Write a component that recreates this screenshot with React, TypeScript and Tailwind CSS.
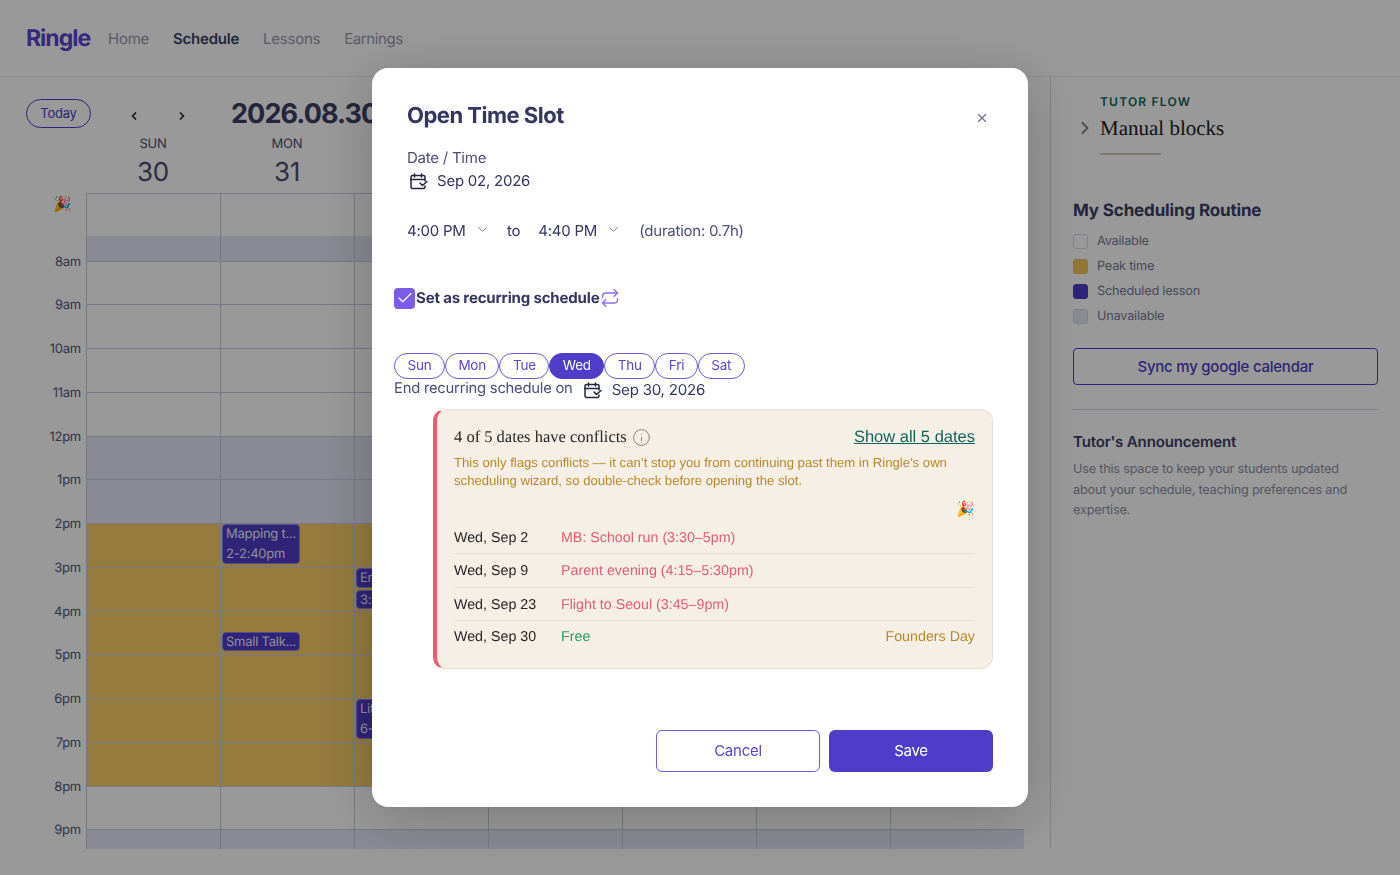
import { Check, ChevronDown, ChevronLeft, ChevronRight, Info, Repeat, X } from "lucide-react";

const days = [
  ["SUN", "30"],
  ["MON", "31"],
  ["TUE", "1"],
  ["WED", "2"],
  ["THU", "3"],
  ["FRI", "4"],
  ["SAT", "5"],
];
const hours = ["8am", "9am", "10am", "11am", "12pm", "1pm", "2pm", "3pm", "4pm", "5pm", "6pm", "7pm", "8pm"];
const blocked = ["12pm", "1pm"];
const peak = ["2pm", "3pm", "4pm", "5pm", "6pm", "7pm"];

function CalendarIcon() {
  return (
    <svg width="19" height="17" viewBox="0 0 19 17" fill="none" stroke="#23253f" strokeWidth="1.5" strokeLinecap="round" strokeLinejoin="round" className="shrink-0">
      <path d="M16 8V4a1.5 1.5 0 0 0-1.5-1.5h-11A1.5 1.5 0 0 0 2 4v10a1.5 1.5 0 0 0 1.5 1.5h11A1.5 1.5 0 0 0 16 14v-1" />
      <path d="M2 6.5h14M5.5 1v3M12.5 1v3M11 10l2.5 2.5L18 8.5" />
    </svg>
  );
}

function Lesson({ lines, h, top }: { lines: string[]; h: string; top: string }) {
  return (
    <div className={`absolute left-[1px] z-10 w-[78px] overflow-hidden whitespace-nowrap rounded-[4px] border border-[#8f83e0] bg-[#4f3cc8] px-[3px] text-[13px] leading-[19.5px] text-[#f0eefc] ${h} ${top}`}>
      {lines.map((l) => (
        <div key={l}>{l}</div>
      ))}
    </div>
  );
}

function GridRow({ label, kind }: { label: string; kind: "plain" | "blocked" | "peak" }) {
  return (
    <div className="flex h-[43.75px]">
      <div className="w-[86px] shrink-0 pr-[5px] pt-[1px] text-right text-[13px] leading-none text-[#55587a]">
        <span className="inline-block -translate-y-1/2">{label}</span>
      </div>
      {days.map(([d], i) => {
        const tint = kind === "blocked" ? "bg-[#e4e6f5]" : kind === "peak" && i < 3 ? "bg-[#f9cd68]" : "bg-white";
        return (
          <div key={d} className={`relative flex-1 border-l border-t border-[#c8cae2] ${tint}`}>
            {label === "2pm" && d === "MON" && <Lesson lines={["Mapping t...", "2-2:40pm"]} h="h-[40px]" top="top-0" />}
            {label === "4pm" && d === "MON" && <Lesson lines={["Small Talk..."]} h="h-[19px]" top="top-[20px]" />}
            {label === "3pm" && d === "TUE" && <Lesson lines={["English..."]} h="h-[20px]" top="top-0" />}
            {label === "3pm" && d === "TUE" && <Lesson lines={["3:30-4pm"]} h="h-[19px]" top="top-[22px]" />}
            {label === "6pm" && d === "TUE" && <Lesson lines={["Little w...", "6-6:40pm"]} h="h-[40px]" top="top-0" />}
          </div>
        );
      })}
    </div>
  );
}

function Calendar() {
  return (
    <main className="flex h-[772px] w-[1051px] shrink-0 flex-col overflow-hidden border-r border-[#d4d6e6] pr-[26px]">
      <div className="flex h-[52px] shrink-0 items-end pl-[26px]">
        <button className="mb-[1px] h-[29px] w-[65px] rounded-full border border-[#4f3cc8] text-[13px] text-[#4f3cc8]">Today</button>
        <ChevronLeft size={12} strokeWidth={3.5} className="mb-[7px] ml-[37px] text-[#23253f]" />
        <ChevronRight size={12} strokeWidth={3.5} className="mb-[7px] ml-[36px] text-[#23253f]" />
        <h2 className="-mb-[3px] ml-[43px] whitespace-nowrap text-[27px] font-bold leading-[36px] tracking-[-0.9px] text-[#3d4068]">2026.08.30 - 09.05</h2>
      </div>
      <div className="flex h-[64px] shrink-0 pl-[86px] pt-[6px]">
        {days.map(([d, n]) => (
          <div key={d} className="flex-1 text-center text-[#4b4e70]">
            <div className="pt-[1px] text-[13px] leading-[17px]">{d}</div>
            <div className="mt-[4px] text-[26px] leading-[32px]">{n}</div>
          </div>
        ))}
      </div>
      <div className="flex h-[43px] shrink-0">
        <div className="w-[86px] pr-[14px] pt-[1px] text-right text-[15px] leading-5">🎉</div>
        {days.map(([d]) => (
          <div key={d} className="flex-1 border-l border-t border-[#c8cae2] bg-white" />
        ))}
      </div>
      <div className="flex h-[24.5px] shrink-0">
        <div className="w-[86px]" />
        {days.map(([d]) => (
          <div key={d} className="flex-1 border-l border-[#c8cae2] bg-[#e4e6f5]" />
        ))}
      </div>
      <div className="shrink-0">
        {hours.map((h) => (
          <GridRow key={h} label={h} kind={blocked.includes(h) ? "blocked" : peak.includes(h) ? "peak" : "plain"} />
        ))}
      </div>
      <GridRow label="9pm" kind="blocked" />
    </main>
  );
}

function Sidebar() {
  return (
    <aside className="flex-1 pl-[22px] pr-[22px] pt-[17px]">
      <div className="relative pl-[27px]">
        <ChevronRight size={20} strokeWidth={2.5} className="absolute left-[2px] top-[24px] text-[#8c8274]" />
        <div className="text-[12px] font-semibold leading-4 tracking-[1.2px] text-[#10645c]">TUTOR FLOW</div>
        <div className="mt-[4px] font-['Liberation_Serif',serif] text-[21px] leading-[29px] tracking-normal text-[#1c1c1c]">Manual blocks</div>
        <div className="mt-[10px] h-[2px] w-[61px] bg-[#d8cdb8]" />
      </div>
      <h3 className="mt-[44px] text-[17px] font-bold leading-6 tracking-[-0.15px] text-[#3d4068]">My Scheduling Routine</h3>
      <ul className="mt-[10.5px] flex flex-col gap-[10px] text-[12.75px] leading-[15px] text-[#7a7c96]">
        <li className="flex items-center gap-[9px]"><span className="size-[15px] rounded-[3px] border border-[#d4d6e6] bg-white" />Available</li>
        <li className="flex items-center gap-[9px]"><span className="size-[15px] rounded-[3px] border border-[#f0bd55] bg-[#f5c75f]" />Peak time</li>
        <li className="flex items-center gap-[9px]"><span className="size-[15px] rounded-[3px] border border-[#4f3cc8] bg-[#4f3cc8]" />Scheduled lesson</li>
        <li className="flex items-center gap-[9px]"><span className="size-[15px] rounded-[3px] border border-[#d0d2e6] bg-[#e4e6f5]" />Unavailable</li>
      </ul>
      <button className="mt-[24.5px] h-[37px] w-full rounded-[4px] border border-[#4f3cc8] pt-[1px] text-[15px] font-medium text-[#4f3cc8]">Sync my google calendar</button>
      <div className="mt-[24px] h-px bg-[#d4d6e6]" />
      <h3 className="mt-[22px] text-[15px] font-semibold leading-5 tracking-[-0.15px] text-[#3d4068]">Tutor's Announcement</h3>
      <p className="mt-[8px] max-w-[285px] text-[12.75px] leading-[20.5px] text-[#8f91a8]">
        Use this space to keep your students updated about your schedule, teaching preferences and expertise.
      </p>
    </aside>
  );
}

function ConflictRow({ date, note, free, last }: { date: string; note: string; free?: boolean; last?: boolean }) {
  return (
    <div className={`flex h-[33.3px] items-center text-[14.25px] ${last ? "" : "border-b border-[#e6ded1] pt-[3px]"}`}>
      <span className="w-[107px] text-[#262626]">{date}</span>
      <span className={free ? "text-[#2b9a63]" : "text-[#e55d70]"}>{note}</span>
      {last && <span className="ml-auto text-[#b8892b]">Founders Day</span>}
    </div>
  );
}

function Modal() {
  const week = ["Sun", "Mon", "Tue", "Wed", "Thu", "Fri", "Sat"];
  return (
    <div className="fixed inset-0 z-50 flex items-start justify-center bg-black/40 pt-[68px]">
      <div className="relative h-[739px] w-[656px] rounded-[16px] bg-white pl-[22px] pr-[35px] pt-[33px] shadow-[0_10px_60px_rgba(0,0,0,0.22)]">
        <button className="absolute right-[39px] top-[43px] text-[#6b6e8c]">
          <X size={14} />
        </button>
        <div className="pl-[13px]">
          <h2 className="text-[22px] font-bold leading-[30px] tracking-[-0.5px] text-[#33365f]">Open Time Slot</h2>
          <div className="mt-[17px] text-[15px] leading-5 text-[#4b4e78]">Date / Time</div>
          <div className="mt-[2px] flex h-[22px] items-center gap-[9px] pl-[2px] text-[15px] text-[#33365f]">
            <CalendarIcon />
            Sep 02, 2026
          </div>
          <div className="mt-[27px] flex h-[24px] items-center text-[15px] text-[#33365f]">
            <span className="w-[68px]">4:00 PM</span>
            <ChevronDown size={15} strokeWidth={1.5} className="-mt-[3px] text-[#6b6e8c]" />
            <span className="ml-[17px]">to</span>
            <span className="ml-[18px] w-[68px]">4:40 PM</span>
            <ChevronDown size={15} strokeWidth={1.5} className="-mt-[3px] text-[#6b6e8c]" />
            <span className="ml-[18px] text-[#4b4e78]">(duration: 0.7h)</span>
          </div>
        </div>
        <div className="mt-[44px] flex h-[22px] items-center text-[15px] font-bold tracking-[-0.16px] text-[#33365f]">
          <span className="flex size-[21px] items-center justify-center rounded-[4px] bg-[#7c5ce7]">
            <Check size={18} strokeWidth={1.5} className="text-white" />
          </span>
          <span className="ml-px">Set as recurring schedule</span>
          <Repeat size={20} strokeWidth={1.75} className="ml-px text-[#8d6ff0]" />
        </div>
        <div className="mt-[44px] flex h-[26px]">
          {week.map((d) => (
            <button
              key={d}
              className={`rounded-full border-[1.5px] px-[12.5px] text-[13.5px] leading-none ${d === "Wed" ? "border-[#4f3cc8] bg-[#4f3cc8] text-white" : "border-[#6d5bd8] bg-white text-[#5b48d0]"}`}
            >
              {d}
            </button>
          ))}
        </div>
        <div className="flex h-[21px] items-center pt-[2px] text-[#33365f]">
          <span className="-mt-[4px] text-[14.8px] text-[#4b4e78]">End recurring schedule on</span>
          <span className="ml-[10px]"><CalendarIcon /></span>
          <span className="ml-[10px] text-[15.1px]">Sep 30, 2026</span>
        </div>
        <div className="ml-[39px] mt-[9px] h-[260px] rounded-[12px] border border-l-[4px] border-[#e8e0d3] border-l-[#e85d6f] bg-[#f5efe6] pl-[17px] pr-[17px] pt-[14px] font-['Liberation_Sans',sans-serif] tracking-normal">
          <div className="flex h-[26px] items-center">
            <span className="font-['Liberation_Serif',serif] text-[16.5px] text-[#262626]">4 of 5 dates have conflicts</span>
            <Info size={19} strokeWidth={1.25} className="ml-[5px] text-[#8c8274]" />
            <a className="ml-auto text-[16.5px] text-[#14635c] underline">Show all 5 dates</a>
          </div>
          <p className="mt-[4px] text-[13.13px] leading-[18px] text-[#b8892b]">
            This only flags conflicts — it can’t stop you from continuing past them in Ringle’s own scheduling wizard, so double-check before opening the slot.
          </p>
          <div className="mt-[10px] h-[20px] text-right text-[15px] leading-5">🎉</div>
          <div className="mt-[1px]">
            <ConflictRow date="Wed, Sep 2" note="MB: School run (3:30–5pm)" />
            <ConflictRow date="Wed, Sep 9" note="Parent evening (4:15–5:30pm)" />
            <ConflictRow date="Wed, Sep 23" note="Flight to Seoul (3:45–9pm)" />
            <ConflictRow date="Wed, Sep 30" note="Free" free last />
          </div>
        </div>
        <div className="mt-[61px] flex justify-end gap-[9px] text-[15px]">
          <button className="h-[42px] w-[164px] rounded-[6px] border-[1.5px] border-[#6d5bd8] text-[#5b48d0]">Cancel</button>
          <button className="h-[42px] w-[164px] rounded-[6px] bg-[#4f3cc8] text-white">Save</button>
        </div>
      </div>
    </div>
  );
}

export default function App() {
  return (
    <div className="h-screen overflow-hidden bg-white font-['Inter',sans-serif] tracking-[-0.24px] [text-rendering:geometricPrecision]">
      <header className="flex h-[77px] items-center border-b border-[#e6e7f0] pl-[26px] pt-[1px] text-[15px] text-[#9496ae]">
        <span className="-mt-[1px] w-[82px] text-[23px] font-bold tracking-[-1px] text-[#5a45cf]">Ringle</span>
        <nav className="flex gap-[24px] pt-[1px]">
          <a>Home</a>
          <a className="font-semibold text-[#3d4068]">Schedule</a>
          <a>Lessons</a>
          <a className="tracking-[-0.4px]">Earnings</a>
        </nav>
      </header>
      <div className="flex">
        <Calendar />
        <Sidebar />
      </div>
      <Modal />
    </div>
  );
}
